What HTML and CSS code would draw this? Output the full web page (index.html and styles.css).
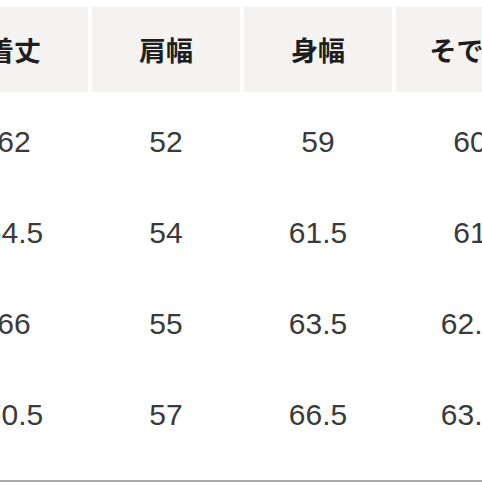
FILE: index.html
```html
<!DOCTYPE html>
<html lang="ja">
<head>
<meta charset="utf-8">
<link rel="stylesheet" href="styles.css">
</head>
<body>
<div class="page">
  <div class="table">
    <div class="row head">
      <div class="cell">着丈</div>
      <div class="cell">肩幅</div>
      <div class="cell">身幅</div>
      <div class="cell">そで丈</div>
    </div>
    <div class="row">
      <div class="cell">62</div>
      <div class="cell">52</div>
      <div class="cell">59</div>
      <div class="cell">60</div>
    </div>
    <div class="row">
      <div class="cell">64.5</div>
      <div class="cell">54</div>
      <div class="cell">61.5</div>
      <div class="cell">61</div>
    </div>
    <div class="row">
      <div class="cell">66</div>
      <div class="cell">55</div>
      <div class="cell">63.5</div>
      <div class="cell">62.5</div>
    </div>
    <div class="row">
      <div class="cell">70.5</div>
      <div class="cell">57</div>
      <div class="cell">66.5</div>
      <div class="cell">63.5</div>
    </div>
  </div>
</div>
</body>
</html>
```

FILE: styles.css
```css
html, body {
  margin: 0;
  padding: 0;
  background: #ffffff;
}
body {
  width: 482px;
  height: 482px;
  overflow: hidden;
}
.page {
  width: 482px;
  height: 482px;
  overflow: hidden;
  box-sizing: border-box;
  padding-top: 7px;
  border-bottom: 2px solid #a9a9a9;
}
.table {
  margin-left: -60px;
  width: 604px;
  display: flex;
  flex-direction: column;
}
.row {
  display: grid;
  grid-template-columns: repeat(4, 148px);
  column-gap: 4px;
  height: 91px;
  align-items: center;
}
.cell {
  text-align: center;
  font-family: "Liberation Sans", Arial, sans-serif;
  font-size: 30px;
  color: #3a3a3a;
  line-height: 1;
}
.row.head {
  height: 85px;
  margin-bottom: 4px;
  align-items: stretch;
}
.row.head .cell {
  background: #f4f3f2;
  display: flex;
  align-items: center;
  justify-content: center;
  font-family: "Noto Sans CJK JP", "Noto Sans", sans-serif;
  font-weight: 700;
  font-size: 27px;
  color: #1e1e1e;
}
```
